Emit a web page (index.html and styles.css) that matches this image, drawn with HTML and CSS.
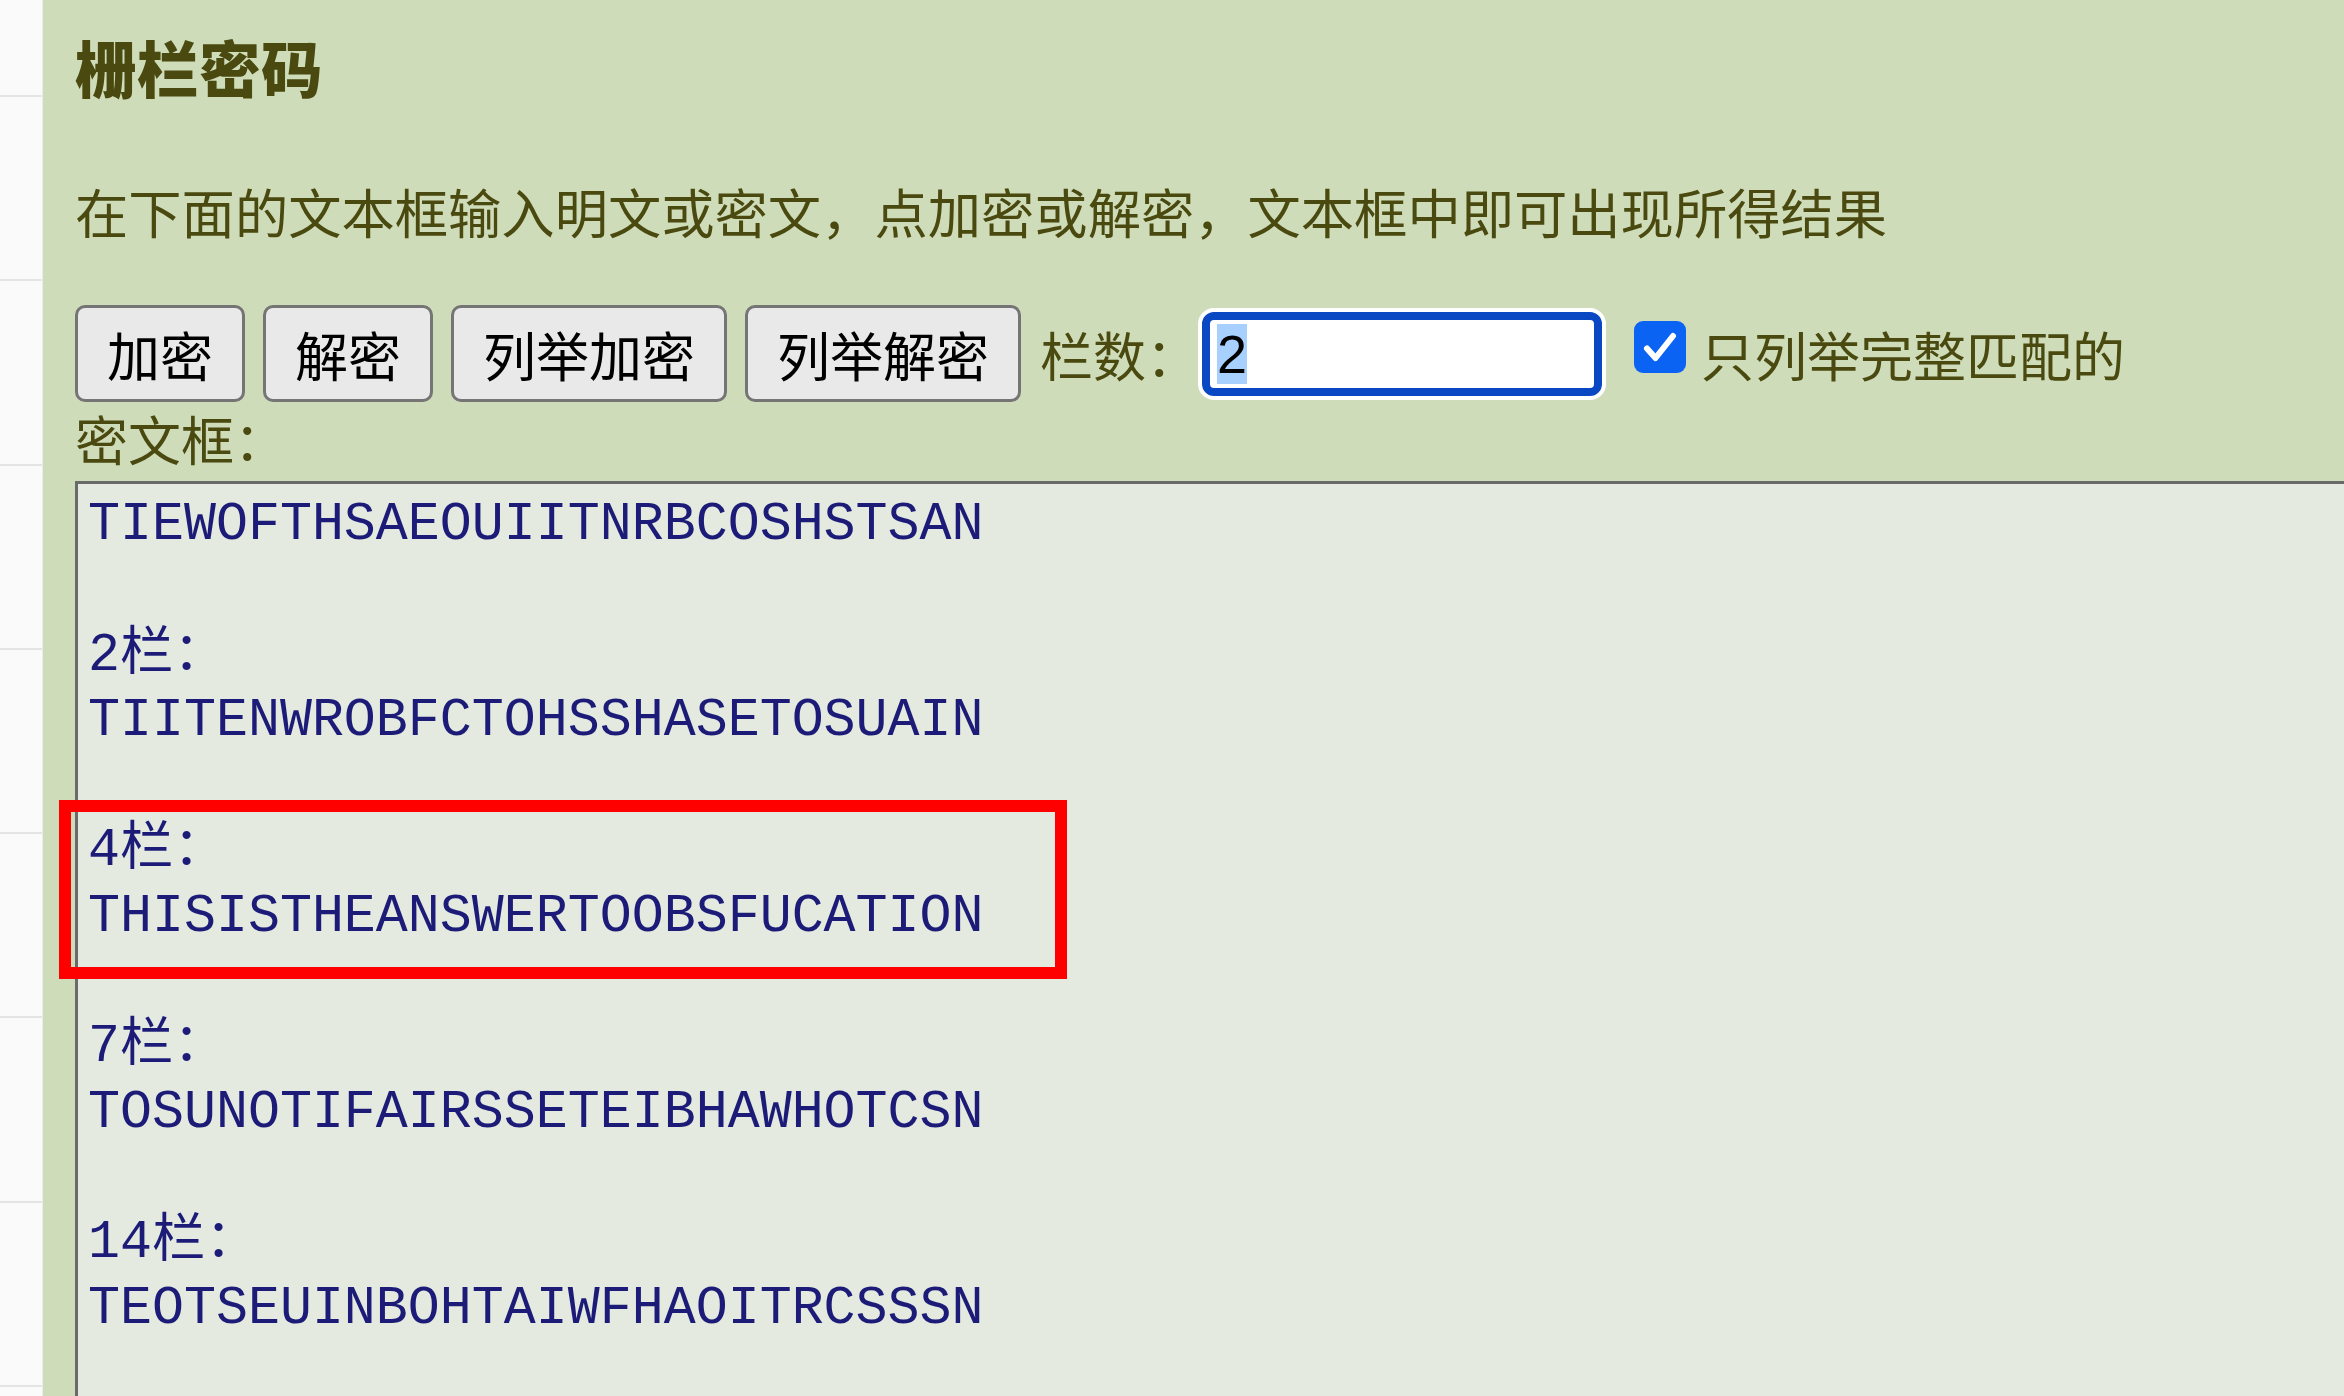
FILE: index.html
```html
<!DOCTYPE html>
<html lang="zh-CN">
<head>
<meta charset="utf-8">
<title>栅栏密码</title>
<link rel="stylesheet" href="styles.css">
</head>
<body>
<div class="page">
  <aside class="sidebar">
    <ul class="side-list">
      <li class="side-item first"></li>
      <li class="side-item"></li>
      <li class="side-item"></li>
      <li class="side-item"></li>
      <li class="side-item"></li>
      <li class="side-item"></li>
      <li class="side-item"></li>
      <li class="side-item"></li>
    </ul>
  </aside>
  <main class="main">
    <h2 class="title">栅栏密码</h2>
    <p class="desc">在下面的文本框输入明文或密文，点加密或解密，文本框中即可出现所得结果</p>
    <div class="controls">
      <button class="btn" type="button">加密</button>
      <button class="btn" type="button">解密</button>
      <button class="btn" type="button">列举加密</button>
      <button class="btn" type="button">列举解密</button>
      <span class="field-label">栏数：</span>
      <div class="num-input"><span class="sel">2</span></div>
      <span class="check" aria-checked="true" role="checkbox">
        <svg width="52" height="52" viewBox="0 0 52 52"><path d="M13 27.5 L21.5 37 L39 15" fill="none" stroke="#fff" stroke-width="6" stroke-linecap="round" stroke-linejoin="round"/></svg>
      </span>
      <span class="check-label">只列举完整匹配的</span>
    </div>
    <div class="box-label">密文框：</div>
    <div class="editor">
      <textarea class="cipher" readonly spellcheck="false">TIEWOFTHSAEOUIITNRBCOSHSTSAN

2栏：
TIITENWROBFCTOHSSHASETOSUAIN

4栏：
THISISTHEANSWERTOOBSFUCATION

7栏：
TOSUNOTIFAIRSSETEIBHAWHOTCSN

14栏：
TEOTSEUINBOHTAIWFHAOITRCSSSN
</textarea>
      <div class="highlight"></div>
    </div>
  </main>
</div>
</body>
</html>
```
FILE: styles.css
```css
html, body {
  margin: 0;
  padding: 0;
  height: 1396px;
  overflow: hidden;
}

body {
  font-family: "Noto Sans CJK SC", "Noto Sans", sans-serif;
  background: #fbfbfb;
}

.page {
  display: flex;
  height: 1396px;
}

.sidebar {
  width: 42px;
  flex: 0 0 42px;
  background: #fafafa;
  border-right: 1px solid #ececec;
  overflow: hidden;
}

.side-list {
  list-style: none;
  margin: 0;
  padding: 0;
}

.side-item {
  height: 182.3px;
  border-bottom: 2px solid #e4e4e4;
}

.side-item.first {
  height: 95px;
}

.main {
  flex: 1;
  min-width: 0;
  background: #cfdcb9;
  padding-left: 32px;
  overflow: hidden;
  color: #4a4a10;
}

.title {
  margin: 30px 0 0;
  font-size: 61.5px;
  line-height: 73px;
  font-weight: 900;
  letter-spacing: 0.5px;
}

.desc {
  margin: 76px 0 0;
  font-size: 53.3px;
  line-height: 64px;
}

.controls {
  display: flex;
  align-items: center;
  margin-top: 62px;
  height: 97px;
}

.btn {
  box-sizing: border-box;
  height: 97px;
  padding: 0 29px;
  border: 3px solid #757575;
  border-radius: 10px;
  background: #e9e9e9;
  color: #000;
  font-family: "Noto Sans CJK SC", sans-serif;
  font-size: 53px;
  line-height: 64px;
}

.btn + .btn {
  margin-left: 18px;
}

.field-label {
  margin-left: 19px;
  font-size: 53px;
  line-height: 64px;
}

.num-input {
  box-sizing: border-box;
  width: 400px;
  height: 84px;
  margin-left: 3px;
  border: 8px solid #0a47c2;
  border-radius: 12px;
  background: #fff;
  box-shadow: 0 0 0 4px #fff;
  padding-left: 7px;
  display: flex;
  align-items: center;
  font-family: "Liberation Sans", Arial, sans-serif;
  font-size: 54px;
  color: #000;
}

.sel {
  background: #a8d0ff;
  line-height: 60px;
}

.check {
  box-sizing: border-box;
  width: 52px;
  height: 52px;
  margin-left: 32px;
  margin-bottom: 14px;
  border-radius: 9px;
  background: #0b63f4;
  display: flex;
}

.check-label {
  margin-left: 15px;
  font-size: 53px;
  line-height: 64px;
}

.box-label {
  margin-top: 4px;
  font-size: 53px;
  line-height: 64px;
}

.editor {
  position: relative;
  margin-top: 11px;
}

.cipher {
  display: block;
  box-sizing: border-box;
  width: 2400px;
  height: 1000px;
  margin: 0;
  padding: 9px 10px;
  border: 0;
  border-top: 3px solid #6a6a6a;
  border-left: 3px solid #6a6a6a;
  background: #e4eadf;
  color: #1c1c78;
  font-family: "Courier New", "Nimbus Mono PS", "Nimbus Mono L", "FreeMono", "Liberation Mono", "Noto Sans CJK SC", monospace;
  font-size: 53.3px;
  line-height: 65.3px;
  resize: none;
  overflow: hidden;
  outline: none;
}

.highlight {
  position: absolute;
  left: -16px;
  top: 319px;
  width: 1008px;
  height: 179px;
  box-sizing: border-box;
  border: 12px solid #ff0000;
  pointer-events: none;
}
```
